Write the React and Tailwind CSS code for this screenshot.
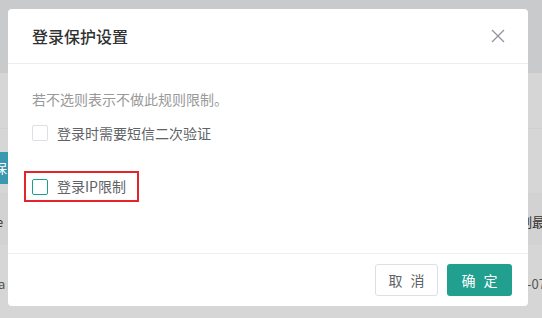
import React from 'react';

const font = { fontFamily: '"Noto Sans CJK SC", "Noto Sans", sans-serif' };

const Checkbox = ({ active }) => (
  <span
    className={`inline-block w-4 h-4 rounded-[2px] border bg-white ${
      active ? 'border-[#1f9e8e]' : 'border-[#dcdfe6]'
    }`}
  />
);

const App = () => {
  return (
    <div className="relative w-[542px] h-[318px] overflow-hidden bg-[#d6d6d6]" style={font}>
      {/* page behind the overlay */}
      <div className="h-[73px] bg-[#c9cacc]" />
      <div className="h-[56px] border-b border-[#cfcfcf]" />
      <div className="pt-[23px] h-[64px]">
        <div className="w-[8px] h-[32px] bg-[#3a99b1] text-white text-[13px] leading-[32px] overflow-hidden">
          <span className="-ml-[6px]">保</span>
        </div>
      </div>
      <div className="flex justify-between items-center h-[52px] pt-[6px] bg-[#d2d2d2] text-[13px] text-[#333]">
        <span className="-ml-[4px]">e</span>
        <span className="-mr-[3px]">制最</span>
      </div>
      <div className="flex justify-between items-center h-[73px] pt-[4px] text-[13px] text-[#555]">
        <span className="-ml-[2px]">a</span>
        <span className="-mr-[4px]">-07</span>
      </div>

      {/* modal */}
      <div className="absolute left-[8px] top-[9px] w-[520px] h-[297px] bg-white rounded-[4px] flex flex-col">
        <div className="h-[55px] flex items-center justify-between px-6 border-b border-[#ebeef5]">
          <span className="text-[16px] text-[#303133] font-medium">登录保护设置</span>
          <svg width="14" height="14" viewBox="0 0 14 14" className="mr-[-1px]">
            <path d="M1 1L13 13M13 1L1 13" stroke="#909399" strokeWidth="1.3" fill="none" />
          </svg>
        </div>
        <div className="flex-1 px-6 pt-6">
          <p className="text-[14px] leading-[22px] text-[#999]">若不选则表示不做此规则限制。</p>
          <div className="mt-3 flex items-center gap-[9px] h-[22px]">
            <Checkbox />
            <span className="text-[14px] text-[#606266]">登录时需要短信二次验证</span>
          </div>
          <div className="mt-[27px] -ml-2 inline-flex items-center gap-[9px] h-[31px] pl-[6px] pr-[11px] border-2 border-[#e3242b]">
            <Checkbox active />
            <span className="text-[14px] text-[#606266]">登录IP限制</span>
          </div>
        </div>
        <div className="h-[53px] border-t border-[#ebeef5] flex items-center justify-end gap-[9px] pr-4">
          <button className="w-[63px] h-[32px] rounded-[3px] border border-[#dcdfe6] bg-white text-[14px] text-[#606266]">
            <span className="mr-[8px]">取</span>消
          </button>
          <button className="w-[65px] h-[32px] rounded-[3px] bg-[#21a08f] text-[14px] text-white">
            <span className="mr-[8px]">确</span>定
          </button>
        </div>
      </div>
    </div>
  );
};

export default App;
